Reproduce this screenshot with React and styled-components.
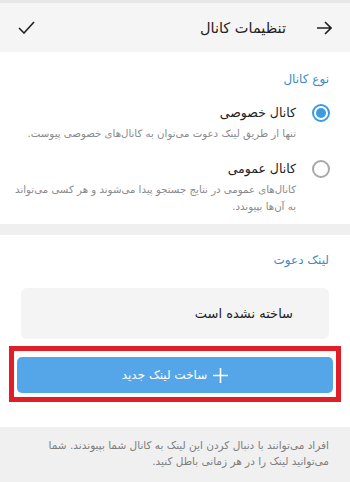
import styled, { createGlobalStyle } from "styled-components";

const GlobalStyle = createGlobalStyle`
  body {
    margin: 0;
    background: #ffffff;
    font-family: "DejaVu Sans", "Noto Sans", sans-serif;
  }
`;

const Page = styled.div`
  direction: rtl;
  width: 350px;
  height: 482px;
  overflow: hidden;
  display: flex;
  flex-direction: column;
  & > * {
    flex-shrink: 0;
  }
`;

const Header = styled.header`
  height: 49px;
  border-top: 3px solid #e7e7e7;
  background: #f5f5f5;
  display: flex;
  align-items: center;
  padding: 0 17px 0 17px;
`;

const HeaderTitle = styled.h1`
  margin: 0 29px 0 0;
  flex: 1;
  font-size: 14.5px;
  font-weight: normal;
  color: #222;
`;

const IconBtn = styled.span`
  width: 18px;
  height: 18px;
  display: flex;
  align-items: center;
  justify-content: center;
`;

const Section = styled.section`
  background: #fff;
  padding: ${(p) => p.$padding};
`;

const SectionTitle = styled.div`
  color: #3d8bc5;
  font-size: 12px;
  padding: 0 21px;
  height: 20px;
  line-height: 20px;
`;

const Option = styled.div`
  display: flex;
  align-items: flex-start;
  gap: 16px;
  padding: 0 20px 0 20px;
  margin-top: ${(p) => p.$top}px;
`;

const Radio = styled.span`
  flex: none;
  width: 18px;
  height: 18px;
  margin-top: 1px;
  border-radius: 50%;
  box-sizing: border-box;
  border: 2px solid ${(p) => (p.$on ? "#3b9be3" : "#a8a8a8")};
  display: flex;
  align-items: center;
  justify-content: center;
  &::after {
    content: "";
    width: 10px;
    height: 10px;
    border-radius: 50%;
    background: ${(p) => (p.$on ? "#3b9be3" : "transparent")};
  }
`;

const OptionText = styled.div`
  display: flex;
  flex-direction: column;
  gap: 2px;
`;

const OptionLabel = styled.div`
  font-size: 12.5px;
  color: #222;
  line-height: 20px;
`;

const OptionDesc = styled.div`
  font-size: 10.2px;
  color: #8a8a8a;
  line-height: 17px;
  white-space: nowrap;
`;

const Divider = styled.div`
  height: 11px;
  background: #efefef;
`;

const LinkBox = styled.div`
  margin: 18px 21px 0 21px;
  height: 51px;
  border-radius: 6px;
  background: #f4f4f4;
  display: flex;
  align-items: center;
  padding: 0 36px;
  font-size: 13px;
  color: #222;
`;

const Highlight = styled.div`
  margin: 7px 9px 0 9px;
  border: 5px solid #e11d25;
  padding: 6px 3px 4px 3px;
`;

const CreateButton = styled.button`
  width: 100%;
  height: 36px;
  border: 0;
  border-radius: 5px;
  background: #55a6e9;
  color: #fff;
  font-family: inherit;
  font-size: 12px;
  display: flex;
  align-items: center;
  justify-content: center;
  gap: 6px;
  direction: rtl;
`;

const Footer = styled.footer`
  margin-top: 25px;
  flex: 1;
  background: #f0f0f0;
  padding: 10px 21px 0 21px;
  font-size: 10.5px;
  line-height: 16px;
  color: #7d7d7d;
  white-space: nowrap;
`;

export default function App() {
  return (
    <>
      <GlobalStyle />
      <Page>
        <Header>
          <IconBtn>
            <svg width="16" height="14" viewBox="0 0 16 14" fill="none" stroke="#222" strokeWidth="1.6">
              <path d="M1 7h14M9 1l6 6-6 6" />
            </svg>
          </IconBtn>
          <HeaderTitle>تنظیمات کانال</HeaderTitle>
          <IconBtn>
            <svg width="17" height="13" viewBox="0 0 17 13" fill="none" stroke="#222" strokeWidth="1.6">
              <path d="M1 7l5 5L16 1" />
            </svg>
          </IconBtn>
        </Header>

        <Section $padding="17px 0 9px 0">
          <SectionTitle>نوع کانال</SectionTitle>
          <Option $top={14}>
            <Radio $on />
            <OptionText>
              <OptionLabel>کانال خصوصی</OptionLabel>
              <OptionDesc>تنها از طریق لینک دعوت می‌توان به کانال‌های خصوصی پیوست.</OptionDesc>
            </OptionText>
          </Option>
          <Option $top={17}>
            <Radio />
            <OptionText>
              <OptionLabel>کانال عمومی</OptionLabel>
              <OptionDesc>
                کانال‌های عمومی در نتایج جستجو پیدا می‌شوند و هر کسی می‌تواند
                <br />
                به آن‌ها بپیوندد.
              </OptionDesc>
            </OptionText>
          </Option>
        </Section>

        <Divider />

        <Section $padding="15px 0 0 0">
          <SectionTitle>لینک دعوت</SectionTitle>
          <LinkBox>ساخته نشده است</LinkBox>
          <Highlight>
            <CreateButton>
              <svg width="15" height="15" viewBox="0 0 15 15" stroke="#fff" strokeWidth="1.6">
                <path d="M7.5 0v15M0 7.5h15" />
              </svg>
              ساخت لینک جدید
            </CreateButton>
          </Highlight>
        </Section>

        <Footer>
          افراد می‌توانند با دنبال کردن این لینک به کانال شما بپیوندند. شما
          <br />
          می‌توانید لینک را در هر زمانی باطل کنید.
        </Footer>
      </Page>
    </>
  );
}
